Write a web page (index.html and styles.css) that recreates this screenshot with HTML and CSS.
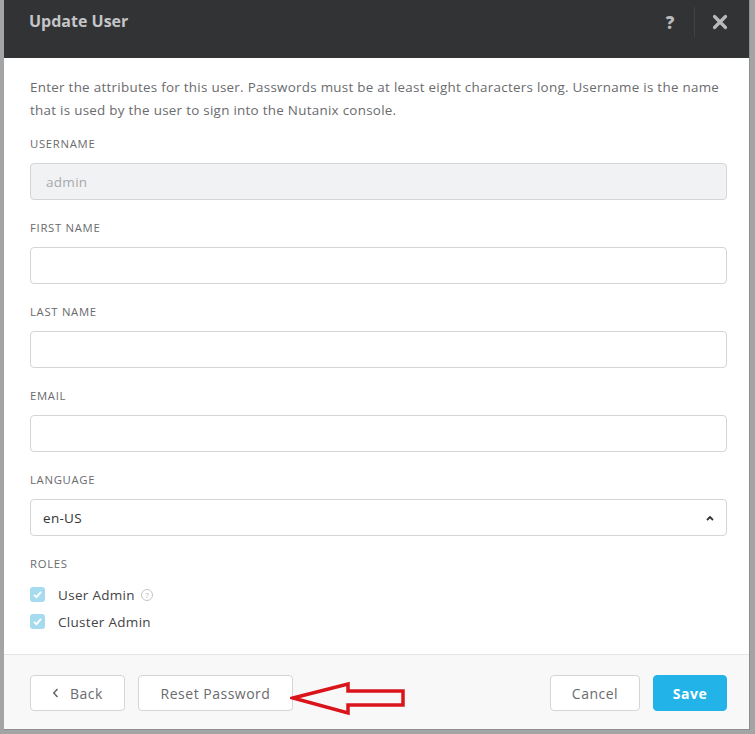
FILE: index.html
```html
<!DOCTYPE html>
<html lang="en">
<head>
    <meta charset="UTF-8">
    <title>Update User</title>
    <link rel="stylesheet" href="styles.css">
</head>
<body>
    <div class="modal">
        <div class="modal-header">
            <h2>Update User</h2>
            <div class="header-actions">
                <span class="help-btn">?</span>
                <span class="header-divider"></span>
                <svg class="close-btn" width="16" height="16" viewBox="0 0 16 16">
                    <path d="M2.5 2.5 L13.5 13.5 M13.5 2.5 L2.5 13.5" stroke="#b9babc" stroke-width="3.2" stroke-linecap="round"/>
                </svg>
            </div>
        </div>

        <div class="modal-body">
            <p class="intro">Enter the attributes for this user. Passwords must be at least eight characters long. Username is the name that is used by the user to sign into the Nutanix console.</p>

            <div class="field">
                <label>Username</label>
                <div class="input disabled">admin</div>
            </div>
            <div class="field">
                <label>First Name</label>
                <div class="input"></div>
            </div>
            <div class="field">
                <label>Last Name</label>
                <div class="input"></div>
            </div>
            <div class="field">
                <label>Email</label>
                <div class="input"></div>
            </div>
            <div class="field">
                <label>Language</label>
                <div class="input select">
                    <span>en-US</span>
                    <svg width="8" height="6" viewBox="0 0 8 6"><path d="M1 5 L4 2 L7 5" fill="none" stroke="#333" stroke-width="1.8"/></svg>
                </div>
            </div>

            <div class="roles">
                <label>Roles</label>
                <div class="check-row">
                    <span class="checkbox"><svg width="11" height="11" viewBox="0 0 11 11"><path d="M2 5.8 L4.5 8.2 L9 2.8" fill="none" stroke="#fff" stroke-width="1.8"/></svg></span>
                    <span>User Admin</span>
                    <span class="info-icon">?</span>
                </div>
                <div class="check-row">
                    <span class="checkbox"><svg width="11" height="11" viewBox="0 0 11 11"><path d="M2 5.8 L4.5 8.2 L9 2.8" fill="none" stroke="#fff" stroke-width="1.8"/></svg></span>
                    <span>Cluster Admin</span>
                </div>
            </div>
        </div>

        <div class="modal-footer">
            <div class="footer-left">
                <button class="btn btn-back">
                    <svg width="7" height="10" viewBox="0 0 7 10"><path d="M5.5 1 L1.8 5 L5.5 9" fill="none" stroke="#6a6b6e" stroke-width="1.6"/></svg>
                    <span>Back</span>
                </button>
                <button class="btn btn-reset">Reset Password</button>
            </div>
            <div class="footer-right">
                <button class="btn btn-cancel">Cancel</button>
                <button class="btn btn-save">Save</button>
            </div>

            <!-- annotation arrow -->
            <svg class="red-arrow" width="120" height="36" viewBox="0 0 120 36">
                <path d="M3 17 L58 3 L58 10 L113 10 L113 24 L58 24 L58 32 Z" fill="none" stroke="#d9141b" stroke-width="3.5" stroke-linejoin="miter"/>
            </svg>
        </div>
    </div>
</body>
</html>
```

FILE: styles.css
```css
* {
    margin: 0;
    padding: 0;
    box-sizing: border-box;
}

body {
    background: #a3a4a6;
    font-family: "Open Sans", "Liberation Sans", sans-serif;
    color: #555;
    width: 755px;
    height: 734px;
    overflow: hidden;
}

.modal {
    margin-left: 4px;
    width: 746px;
    height: 730px;
    background: #fff;
    display: flex;
    flex-direction: column;
    border-right: 1px solid #8d8e90;
    border-bottom: 1px solid #8d8e90;
}

/* Header */
.modal-header {
    height: 58px;
    background: #323335;
    display: flex;
    justify-content: space-between;
    align-items: flex-start;
    padding: 9px 21px 0 25px;
    flex-shrink: 0;
}

.modal-header h2 {
    font-size: 16px;
    font-weight: 700;
    color: #c4c5c7;
    line-height: 24px;
}

.header-actions {
    display: flex;
    align-items: center;
    height: 26px;
}

.help-btn {
    font-size: 17px;
    font-weight: 800;
    color: #b9babc;
    width: 12px;
    text-align: center;
}

.header-divider {
    width: 1px;
    height: 30px;
    background: #414245;
    margin: 0 17px 0 18px;
}

.close-btn {
    display: block;
}

/* Body */
.modal-body {
    flex: 1;
    padding: 18px 22px 0 26px;
}

.intro {
    font-size: 13.4px;
    line-height: 23px;
    color: #6a6b6e;
    letter-spacing: 0.28px;
    margin-bottom: 14px;
}

.field {
    margin-bottom: 20px;
}

label {
    display: block;
    font-size: 11.3px;
    line-height: 16px;
    text-transform: uppercase;
    color: #6a6b6e;
    margin-bottom: 11px;
    letter-spacing: 0.7px;
}

.input {
    height: 37px;
    border: 1px solid #d4d5d8;
    border-radius: 4px;
    background: #fff;
    display: flex;
    align-items: center;
    padding: 0 15px;
    font-size: 13.5px;
    letter-spacing: 0.3px;
}

.input.disabled {
    background: #f1f2f4;
    color: #a8a9ac;
}

.input.select {
    justify-content: space-between;
    color: #333;
    padding: 0 12px 0 12px;
}

/* Roles */
.roles label {
    margin-bottom: 9px;
}

.check-row {
    display: flex;
    align-items: center;
    height: 27px;
    font-size: 13.5px;
    letter-spacing: 0.3px;
    color: #444;
}

.checkbox {
    width: 15px;
    height: 15px;
    border-radius: 3px;
    background: #a6dbef;
    display: flex;
    align-items: center;
    justify-content: center;
    margin-right: 13px;
}

.info-icon {
    width: 12px;
    height: 12px;
    border: 1px solid #c4c5c8;
    border-radius: 50%;
    color: #b4b5b8;
    font-size: 8px;
    line-height: 10px;
    letter-spacing: 0;
    text-align: center;
    margin-left: 6px;
}

/* Footer */
.modal-footer {
    position: relative;
    height: 75px;
    flex-shrink: 0;
    background: #f8f8f9;
    border-top: 1px solid #e4e5e7;
    display: flex;
    justify-content: space-between;
    padding: 20px 22px 0 26px;
}

.footer-left,
.footer-right {
    display: flex;
    gap: 13px;
}

.btn {
    height: 36px;
    border: 1px solid #d4d5d8;
    border-radius: 4px;
    background: #fff;
    font-family: inherit;
    font-size: 14px;
    color: #6a6b6e;
    letter-spacing: 0.5px;
    display: flex;
    align-items: center;
    justify-content: center;
}

.btn-back {
    width: 95px;
    gap: 11px;
}

.btn-reset {
    width: 155px;
}

.btn-cancel {
    width: 90px;
}

.btn-save {
    width: 74px;
    background: #22b4e8;
    border-color: #22b4e8;
    color: #fff;
    font-weight: 700;
}

.red-arrow {
    position: absolute;
    left: 286px;
    top: 26px;
}
```
